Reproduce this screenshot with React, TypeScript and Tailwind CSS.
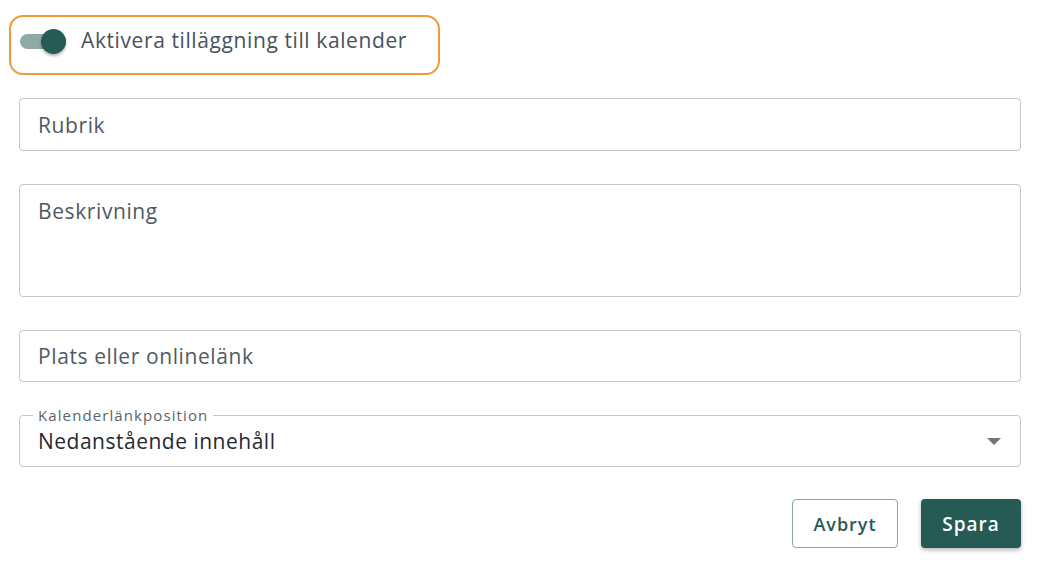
export default function App() {
  return (
    <div
      className="min-h-screen bg-white pl-[19px] pr-[29px] pt-[15px]"
      style={{ fontFamily: "'Open Sans', 'Noto Sans', sans-serif" }}
    >
      {/* toggle row, shown with focus ring */}
      <div className="-ml-[10px] inline-flex h-[60px] w-[431px] items-center rounded-[14px] border-2 border-[#f29a3a] pb-[8px] pl-[9px]">
        <div className="relative h-[15px] w-[46px] rounded-full bg-[#8fa9a5]">
          <div className="absolute -top-[5px] left-[21px] h-[25px] w-[25px] rounded-full bg-[#255a55] shadow-[0_2px_3px_rgba(0,0,0,0.3)]" />
        </div>
        <span className="ml-[15px] text-[21px] tracking-[0.6px] text-[#47525c]">Aktivera tilläggning till kalender</span>
      </div>

      <div className="mt-[23px] flex flex-col gap-[33px]">
        <div className="flex h-[53px] items-center rounded-[4px] border border-[#c6c6c6] px-[18px] pt-[2px] text-[21px] tracking-[0.6px] text-[#4f5a63]">
          Rubrik
        </div>
        <div className="h-[113px] rounded-[4px] border border-[#c6c6c6] px-[18px] pt-[11px] text-[21px] tracking-[0.6px] text-[#4f5a63]">
          Beskrivning
        </div>
        <div className="flex h-[52px] items-center rounded-[4px] border border-[#c6c6c6] px-[18px] pt-[2px] text-[21px] tracking-[0.6px] text-[#4f5a63]">
          Plats eller onlinelänk
        </div>
        <div className="relative flex h-[52px] items-center justify-between rounded-[4px] border border-[#c6c6c6] pl-[18px] pr-[19px]">
          <span className="absolute -top-[12px] left-[13px] bg-white px-[5px] text-[15px] tracking-[1.1px] text-[#5a646c]">Kalenderlänkposition</span>
          <span className="pt-[1px] text-[21px] tracking-[0.5px] text-[#1f2a30]">Nedanstående innehåll</span>
          <svg width="14" height="7" viewBox="0 0 14 7">
            <path d="M0 0h14L7 7z" fill="#757575" />
          </svg>
        </div>
      </div>

      <div className="mt-[32px] flex justify-end gap-[23px]">
        <button className="h-[49px] w-[106px] rounded-[4px] border border-[#85a9a5] pt-[2px] text-[18px] font-semibold tracking-[1px] text-[#255a55]">
          Avbryt
        </button>
        <button className="h-[49px] w-[100px] rounded-[4px] bg-[#255a55] pt-[2px] text-[19px] font-semibold tracking-[1px] text-white shadow-[0_2px_4px_rgba(0,0,0,0.3)]">
          Spara
        </button>
      </div>
    </div>
  );
}
